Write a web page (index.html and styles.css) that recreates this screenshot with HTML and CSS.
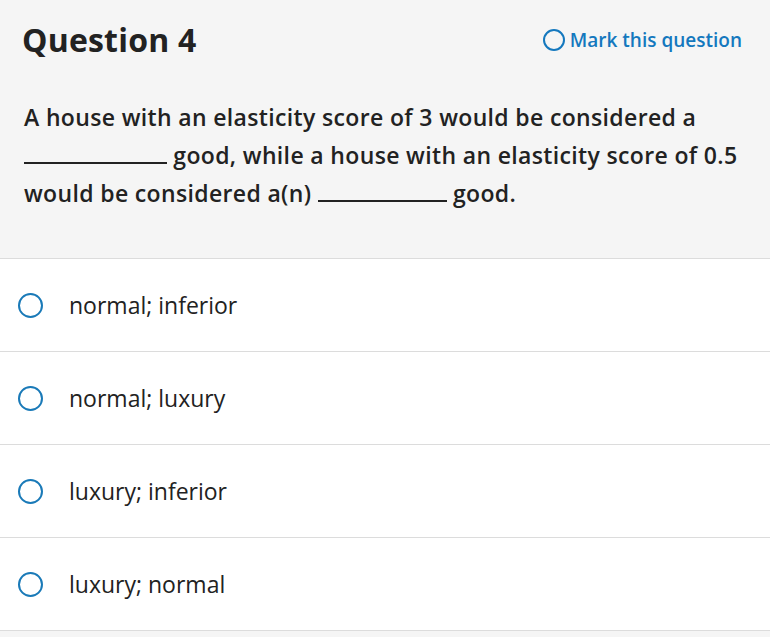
FILE: index.html
```html
<!DOCTYPE html>
<html>
<head>
<meta charset="utf-8">
<link rel="stylesheet" href="styles.css">
</head>
<body>
<div class="question">
  <div class="header">
    <h1 class="title">Question 4</h1>
    <a class="mark"><span class="mark-circle"></span>Mark this question</a>
  </div>
  <p class="prompt">A house with an elasticity score of 3 would be considered a<br><span class="blank b1"></span> good, while a house with an elasticity score of 0.5<br>would be considered a(n) <span class="blank b2"></span> good.</p>
</div>
<ul class="answers">
  <li class="answer"><span class="radio"></span><span class="label">normal; inferior</span></li>
  <li class="answer"><span class="radio"></span><span class="label">normal; luxury</span></li>
  <li class="answer"><span class="radio"></span><span class="label">luxury; inferior</span></li>
  <li class="answer"><span class="radio"></span><span class="label">luxury; normal</span></li>
</ul>
</body>
</html>
```

FILE: styles.css
```css
html, body {
  margin: 0;
  padding: 0;
  background: #f5f5f5;
  font-family: "Open Sans", "Liberation Sans", sans-serif;
  color: #222;
}
.question {
  background: #f5f5f5;
  padding: 18px 28px 0 24px;
  height: 240px;
  border-bottom: 1px solid #dcdcdc;
}
.header {
  display: flex;
  justify-content: space-between;
  align-items: center;
}
.title {
  margin: 0 0 0 -2px;
  font-size: 32px;
  font-weight: 700;
  line-height: 44px;
  letter-spacing: 0.2px;
}
.mark {
  display: flex;
  align-items: center;
  color: #1478be;
  font-size: 19px;
  font-weight: 600;
  letter-spacing: 0;
}
.mark-circle {
  width: 18px;
  height: 18px;
  border: 2px solid #1478be;
  border-radius: 50%;
  margin-right: 5px;
}
.prompt {
  margin: 36px 0 0 0;
  padding-right: 0;
  margin-right: -20px;
  font-size: 23px;
  font-weight: 600;
  line-height: 38px;
  letter-spacing: 0.35px;
}
.blank {
  display: inline-block;
  border-bottom: 2px solid #222;
  vertical-align: baseline;
}
.b1 { width: 143px; }
.b2 { width: 129px; }
.answers {
  list-style: none;
  margin: 0;
  padding: 0;
  background: #fff;
}
.answer {
  display: flex;
  align-items: center;
  height: 92px;
  border-bottom: 1px solid #dcdcdc;
  padding-left: 18px;
}
.radio {
  box-sizing: border-box;
  width: 25px;
  height: 25px;
  border: 2.5px solid #1a7ab8;
  border-radius: 50%;
  margin-right: 26px;
}
.label {
  font-size: 23px;
  letter-spacing: 0;
}
```
